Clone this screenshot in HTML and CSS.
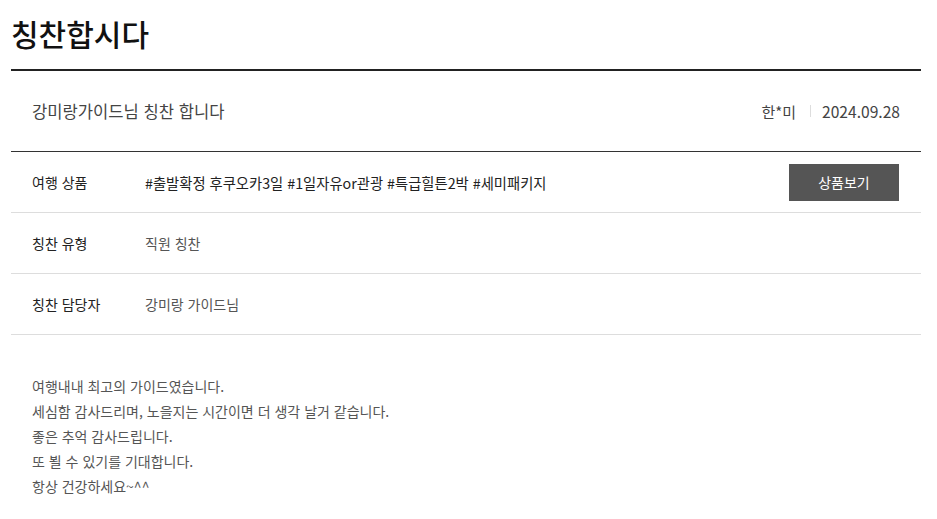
FILE: index.html
```html
<!DOCTYPE html>
<html lang="ko">
<head>
  <meta charset="UTF-8" />
  <title>칭찬합시다</title>
  <link rel="stylesheet" href="styles.css">
</head>
<body>
  <div class="page">
    <h1 class="page-title">칭찬합시다</h1>

    <div class="post-head">
      <h2 class="post-title">강미랑가이드님 칭찬 합니다</h2>
      <div class="post-meta">
        <span class="writer">한*미</span>
        <span class="bar"></span>
        <span class="date">2024.09.28</span>
      </div>
    </div>

    <div class="info-row">
      <div class="info-label">여행 상품</div>
      <div class="info-value wide">#출발확정 후쿠오카3일 #1일자유or관광 #특급힐튼2박 #세미패키지</div>
      <a class="goods-btn" href="#">상품보기</a>
    </div>
    <div class="info-row">
      <div class="info-label">칭찬 유형</div>
      <div class="info-value muted">직원 칭찬</div>
    </div>
    <div class="info-row">
      <div class="info-label">칭찬 담당자</div>
      <div class="info-value muted">강미랑 가이드님</div>
    </div>

    <div class="post-body">
      <p>여행내내 최고의 가이드였습니다.</p>
      <p>세심함 감사드리며, 노을지는 시간이면 더 생각 날거 같습니다.</p>
      <p>좋은 추억 감사드립니다.</p>
      <p>또 뵐 수 있기를 기대합니다.</p>
      <p>항상 건강하세요~^^</p>
    </div>
  </div>
</body>
</html>
```

FILE: styles.css
```css
* {
  box-sizing: border-box;
}
body {
  margin: 0;
  background: #fff;
  font-family: "Noto Sans CJK KR", "Noto Sans", sans-serif;
  color: #222;
}
.page {
  width: 910px;
  margin-left: 11px;
}
.page-title {
  margin: 0;
  padding-top: 10px;
  height: 69px;
  font-size: 30px;
  font-weight: 500;
  line-height: 46px;
  color: #111;
}

.post-head {
  display: flex;
  align-items: center;
  justify-content: space-between;
  height: 83px;
  padding: 0 21px;
  border-top: 2px solid #222;
  border-bottom: 1px solid #333;
}
.post-title {
  margin: 0;
  font-size: 16.6px;
  font-weight: 400;
  color: #444;
}
.post-meta {
  display: flex;
  align-items: center;
  font-size: 15px;
  color: #444;
}
.post-meta .date {
  font-size: 15.6px;
}
.post-meta .bar {
  width: 1px;
  height: 12px;
  background: #ddd;
  margin: 0 11px 0 14px;
}

.info-row {
  display: flex;
  align-items: center;
  height: 61px;
  padding: 0 22px 0 21px;
  border-bottom: 1px solid #ddd;
  font-size: 14px;
}
.info-label {
  width: 113px;
  color: #222;
}
.info-value {
  flex: 1;
  color: #222;
}
.info-value.wide {
  font-size: 14.3px;
}
.info-value.muted {
  color: #555;
}
.goods-btn {
  width: 110px;
  height: 37px;
  line-height: 37px;
  text-align: center;
  background: #555;
  color: #fff;
  text-decoration: none;
}

.post-body {
  padding: 39px 21px;
  font-size: 14px;
  line-height: 25px;
  color: #555;
}
.post-body p {
  margin: 0;
}
```
